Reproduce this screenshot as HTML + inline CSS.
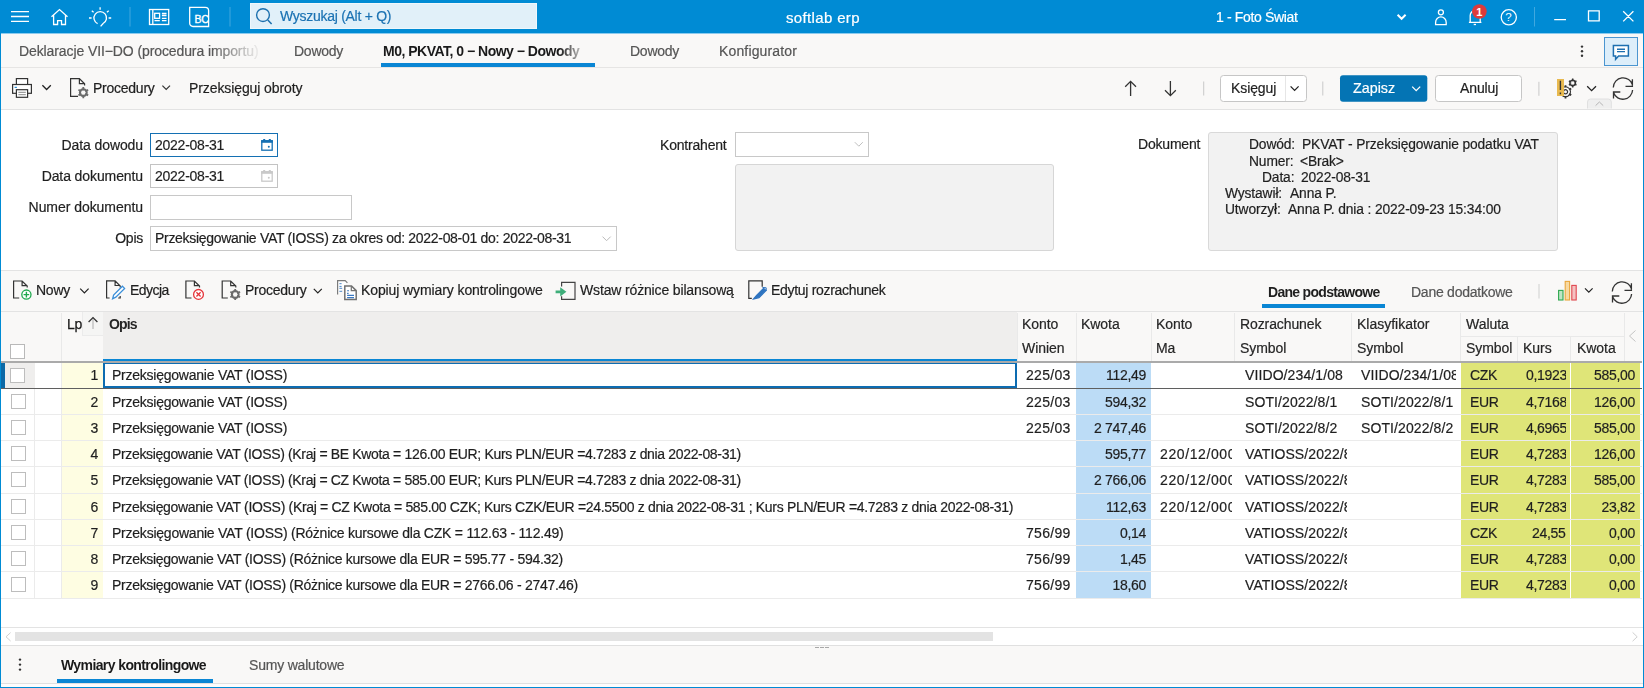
<!DOCTYPE html>
<html><head><meta charset="utf-8">
<style>
*{box-sizing:border-box;margin:0;padding:0}
html,body{width:1644px;height:688px;overflow:hidden;background:#fff}
body{position:relative;font-family:"Liberation Sans",sans-serif;font-size:14px;color:#1f1f1f}
.a{position:absolute}
.t{position:absolute;white-space:nowrap;will-change:transform;-webkit-text-stroke:0.2px currentColor;line-height:16px;font-size:14px;letter-spacing:-0.25px}
.b{font-weight:bold;letter-spacing:-0.6px;-webkit-text-stroke:0}
.hl{position:absolute;height:1px;background:#e4e4e4}
.vl{position:absolute;width:1px;background:#e4e4e4}
svg{position:absolute;overflow:visible}
</style></head><body>

<!-- TOP BAR -->
<div class="a" style="left:0;top:0;width:1644px;height:33px;background:#008bd4"></div>
<!-- page frame -->
<div class="a" style="left:0;top:33px;width:1px;height:655px;background:#008bd4"></div>
<div class="a" style="left:1643px;top:33px;width:1px;height:655px;background:#008bd4"></div>
<div class="a" style="left:0;top:687px;width:1644px;height:1px;background:#008bd4"></div>


<!-- TOP BAR ICONS -->
<svg style="left:0;top:0" width="240" height="33">
 <g stroke="#fff" stroke-width="1.3" fill="none">
  <path d="M11 11.6H29M11 16.5H29M11 21.4H29"/>
  <path d="M51.5 16.8L59.5 9.6L67.5 16.8M53.6 15.2V24.5H57.6V20.7H61.5V24.5H65.5V15.2"/>
  <path d="M97.6 23.6A6.3 6.3 0 1 1 103.1 23.5L100.6 26.4"/>
  <path d="M100.1 7.2V9.8M91.8 10.7L93.6 12.2M108.7 10.7L106.9 12.2M89 18H91.6M108.6 18H111.2"/>
  <rect x="149.5" y="9.5" width="19.2" height="15" />
  <path d="M152.8 9.5V24.5"/>
  <rect x="154.7" y="13.3" width="4.9" height="5" />
  <path d="M161.9 13.5H166.5M161.9 15.5H166.5M161.9 18.3H166.5M154.5 20.6H159.8M161.9 20.6H166.5"/>
  <path d="M189.7 7.3H205.3A3.3 3.3 0 0 1 208.6 10.6V26.5H193A3.3 3.3 0 0 1 189.7 23.2Z"/>
 </g>
 <text x="194.4" y="23.4" fill="#fff" font-family="Liberation Sans" font-size="10.5" letter-spacing="-0.2" stroke="#fff" stroke-width="0.35">BC</text>
 <rect x="129.5" y="7" width="1" height="19.5" fill="#ffffff" opacity="0.25"/>
 <rect x="229.5" y="7" width="1" height="19.5" fill="#ffffff" opacity="0.25"/>
</svg>
<div class="a" style="left:250px;top:3px;width:287px;height:26px;background:#e1f0f9;border:1px solid #eef7fc"></div>
<svg style="left:240px;top:0" width="40" height="33">
 <circle cx="23" cy="15.1" r="6.4" stroke="#1c70ae" stroke-width="1.4" fill="none"/>
 <path d="M27.8 19.9L31.6 23.9" stroke="#1c70ae" stroke-width="1.5"/>
</svg>
<div class="t" style="left:280px;top:8px;color:#1b72b3;letter-spacing:-0.28px">Wyszukaj (Alt + Q)</div>
<div class="t" style="left:785.5px;top:10px;color:#fff;font-size:15px;letter-spacing:0.35px">softlab erp</div>
<div class="t" style="left:1216px;top:9px;color:#fff;letter-spacing:-0.35px">1 - Foto Świat</div>
<svg style="left:1380px;top:0" width="264" height="33">
 <path d="M17.6 14.8L21.6 18.8L25.6 14.8" stroke="#fff" stroke-width="2" fill="none"/>
 <g stroke="#fff" stroke-width="1.3" fill="none">
  <circle cx="60.9" cy="12.3" r="2.5"/>
  <path d="M55.6 24.6V22.5A5.3 5.6 0 0 1 66.2 22.5V24.6Z"/>
  <path d="M90.2 22.3V15.5A5 5 0 0 1 100.2 15.5V22.3M88.9 22.4H101.4"/>
  <path d="M93.7 24.5H96"/>
  <circle cx="128.8" cy="17.3" r="7.6"/>
  <path d="M174.2 19.6H186M208.5 10.9H219.2V20.9H208.5ZM243.2 11.2L253.4 21.4M253.4 11.2L243.2 21.4"/>
 </g>
 <text x="125.3" y="21.3" fill="#fff" font-family="Liberation Sans" font-size="11.5">?</text>
 <rect x="154" y="7" width="1" height="19.5" fill="#fff" opacity="0.25"/>
 <circle cx="99.4" cy="11.5" r="7.3" fill="#dc3a3b"/>
 <text x="96.2" y="16" fill="#fff" font-family="Liberation Sans" font-size="11" font-weight="bold">1</text>
</svg>

<!-- TAB BAR -->
<div class="a" style="left:1px;top:33px;width:1642px;height:34px;background:#f9f8f7"></div>
<div class="a" style="left:1px;top:33px;width:1642px;height:1px;background:#8ccbee"></div>
<div class="hl" style="left:1px;top:67px;width:1642px;background:#e6e5e4"></div>
<!-- TOOLBAR -->
<div class="a" style="left:1px;top:68px;width:1642px;height:41px;background:#f9f8f7"></div>
<div class="hl" style="left:1px;top:109px;width:1642px;background:#e3e3e3"></div>


<!-- TABS -->
<div class="t" style="left:19px;top:43px;color:#555;letter-spacing:-0.1px;width:245px;overflow:hidden;-webkit-mask-image:linear-gradient(90deg,#000 0,#000 192px,rgba(0,0,0,0.1) 238px)">Deklaracje VII−DO (procedura importu)</div>
<div class="t" style="left:294px;top:43px;color:#555">Dowody</div>
<div class="t b" style="left:383px;top:43px;color:#1a1a1a;letter-spacing:-0.5px;width:200px;overflow:hidden;-webkit-mask-image:linear-gradient(90deg,#000 0,#000 176px,rgba(0,0,0,0.3) 197px)">M0, PKVAT, 0 − Nowy − Dowody</div>
<div class="a" style="left:381px;top:63px;width:214px;height:4px;background:#0a86d4"></div>
<div class="t" style="left:630px;top:43px;color:#555">Dowody</div>
<div class="t" style="left:719px;top:43px;color:#555;letter-spacing:0.15px">Konfigurator</div>
<svg style="left:1570px;top:33px" width="74" height="35">
 <circle cx="12" cy="13.6" r="1.2" fill="#333"/><circle cx="12" cy="18.2" r="1.2" fill="#333"/><circle cx="12" cy="22.8" r="1.2" fill="#333"/>
 <rect x="34.5" y="4.5" width="33" height="28" fill="#ddeefa" stroke="#4b95d0" stroke-width="1"/>
 <path d="M43.4 12.4H58.4V22.9H48.6L45.6 26.2V22.9H43.4Z" fill="#fff" stroke="#1e6fb0" stroke-width="1.5"/>
 <path d="M47 16.2H55M47 18.6H55" stroke="#1e6fb0" stroke-width="1.4"/>
</svg>

<!-- TOOLBAR ITEMS -->
<svg style="left:0;top:68px" width="340" height="41">
 <g stroke="#333" stroke-width="1.2" fill="#fff">
  <rect x="16.4" y="10.6" width="11.2" height="6"/>
  <rect x="12.6" y="16.5" width="18.8" height="8.8"/>
  <rect x="16.4" y="21.7" width="11.2" height="7.6"/>
 </g>
 <path d="M18.4 24.3H25.8M18.4 26.7H25.8" stroke="#888" stroke-width="1"/>
 <rect x="14.6" y="18.8" width="2.3" height="1.1" fill="#1b86d0"/>
 <path d="M42.4 17.3L46.6 21.5L50.8 17.3" stroke="#222" stroke-width="1.3" fill="none"/>
 <path d="M78 28.4H70.6V10.6H79.4L84.6 15.8V17.6M79.4 10.6V15.6H84.6" stroke="#333" stroke-width="1.2" fill="none"/>
 <g transform="translate(83.3 24.6)"><circle r="3.4" fill="none" stroke="#6b6b6b" stroke-width="2.1"/><path d="M0 -5.6V5.6M-4.85 -2.8L4.85 2.8M-4.85 2.8L4.85 -2.8" stroke="#6b6b6b" stroke-width="1.8"/><circle r="2.2" fill="#f9f8f7"/></g>
 <path d="M162.4 17.6L166.2 21.4L170 17.6" stroke="#333" stroke-width="1.2" fill="none"/>
</svg>
<div class="t" style="left:93px;top:80px">Procedury</div>
<div class="t" style="left:189px;top:80px;letter-spacing:-0.1px">Przeksięguj obroty</div>

<svg style="left:1100px;top:68px" width="544" height="41">
 <path d="M30.6 13.4V28M25.2 18.8L30.6 13.4L36 18.8" stroke="#333" stroke-width="1.3" fill="none"/>
 <path d="M70.4 13V27.6M65 22.2L70.4 27.6L75.8 22.2" stroke="#333" stroke-width="1.3" fill="none"/>
 <rect x="103.2" y="13.5" width="1" height="14" fill="#c9c9c9"/>
 <rect x="120.5" y="7.5" width="86" height="26" rx="3" fill="#fff" stroke="#c6c6c6"/>
 <rect x="185" y="8" width="1" height="25" fill="#e6e6e6"/>
 <path d="M190.6 18.4L194.6 22.4L198.6 18.4" stroke="#222" stroke-width="1.3" fill="none"/>
 <rect x="222.3" y="13.5" width="1" height="14" fill="#c9c9c9"/>
 <rect x="240" y="7.3" width="87.3" height="26.4" rx="3" fill="#0474b4"/>
 <path d="M312.2 18.6L316.2 22.6L320.2 18.6" stroke="#fff" stroke-width="1.3" fill="none"/>
 <rect x="335.5" y="7.5" width="86" height="26" rx="3" fill="#fff" stroke="#c6c6c6"/>
 <rect x="438.4" y="13.8" width="1" height="14" fill="#c9c9c9"/>
 <rect x="457" y="11" width="7" height="17" fill="#e8b94f"/>
 <g transform="translate(465.5 23.8)"><circle r="4.9" fill="#f9f8f7" stroke="#333" stroke-width="1.3"/><path d="M0 -6.6V6.6M-5.7 -3.3L5.7 3.3M-5.7 3.3L5.7 -3.3" stroke="#333" stroke-width="1.8"/><circle r="4.2" fill="#f9f8f7"/><circle r="2.1" fill="none" stroke="#333" stroke-width="1.2"/></g>
 <rect x="457" y="11" width="7" height="17" fill="#e8b94f"/>
 <path d="M460.4 12.8V21.9M460.4 24.6V26.2" stroke="#333" stroke-width="1.4"/>
 <g transform="translate(472.7 15)"><circle r="2.9" fill="none" stroke="#333" stroke-width="1.3"/><path d="M0 -4.4V4.4M-3.8 -2.2L3.8 2.2M-3.8 2.2L3.8 -2.2" stroke="#333" stroke-width="1.5"/><circle r="1.7" fill="#f9f8f7"/></g>
 <path d="M487.2 18.3L491.6 22.7L496 18.3" stroke="#222" stroke-width="1.3" fill="none"/>
 <path d="M513.3 19.6A9.8 9.8 0 0 1 532.6 17.2M532.4 11.2V18.3H525.5M532.6 22A9.8 9.8 0 0 1 513.6 24.8M513.5 30.6V24H520.3" stroke="#333" stroke-width="1.3" fill="none"/>
 <path d="M487.5 40.5V34A3 3 0 0 1 490.5 31H508.3A3 3 0 0 1 511.3 34V40.5" fill="#efefef" stroke="#e0e0e0"/>
 <path d="M495.6 37.6L499.4 34L503.2 37.6" stroke="#b5b5b5" stroke-width="1" fill="none"/>
</svg>
<div class="t" style="left:1231px;top:80px;letter-spacing:-0.1px">Księguj</div>
<div class="t" style="left:1353px;top:80px;color:#fff;font-size:14.3px;letter-spacing:0px">Zapisz</div>
<div class="t" style="left:1460px;top:80px;letter-spacing:-0.1px">Anuluj</div>

<!-- FORM (white) y 110-270 -->
<div class="hl" style="left:1px;top:270px;width:1642px;background:#e3e3e3"></div>

<!-- FORM -->
<div class="t" style="left:0px;top:137px;width:143px;text-align:right;letter-spacing:-0.1px">Data dowodu</div>
<div class="t" style="left:0px;top:168px;width:143px;text-align:right;letter-spacing:-0.1px">Data dokumentu</div>
<div class="t" style="left:0px;top:199px;width:143px;text-align:right;letter-spacing:-0.05px">Numer dokumentu</div>
<div class="t" style="left:0px;top:230px;width:143px;text-align:right">Opis</div>
<div class="a" style="left:150px;top:133px;width:128px;height:24px;border:1px solid #1470b3;background:#fff"></div>
<div class="a" style="left:150px;top:164px;width:128px;height:24px;border:1px solid #c3c3c3;background:#fff"></div>
<div class="a" style="left:150px;top:195px;width:202px;height:25px;border:1px solid #c8c8c8;background:#fff"></div>
<div class="a" style="left:150px;top:226px;width:467px;height:25px;border:1px solid #c8c8c8;background:#fff"></div>
<div class="t" style="left:155px;top:137px">2022-08-31</div>
<div class="t" style="left:155px;top:168px">2022-08-31</div>
<div class="t" style="left:155px;top:230px;letter-spacing:-0.3px">Przeksięgowanie VAT (IOSS) za okres od: 2022-08-01 do: 2022-08-31</div>
<svg style="left:250px;top:130px" width="380" height="130">
 <g fill="none" stroke-width="1.3">
  <rect x="11.8" y="10.8" width="10.4" height="9.4" stroke="#1470b3"/>
  <rect x="11.8" y="41.8" width="10.4" height="9.4" stroke="#c9c9c9"/>
 </g>
 <rect x="11.2" y="10.2" width="11.6" height="2.6" fill="#1470b3"/>
 <rect x="13.2" y="9" width="2" height="2" fill="#1470b3"/><rect x="18.8" y="9" width="2" height="2" fill="#1470b3"/>
 <circle cx="18.8" cy="16.8" r="1" fill="#1470b3"/>
 <rect x="11.2" y="41.2" width="11.6" height="2.6" fill="#c9c9c9"/>
 <rect x="13.2" y="40" width="2" height="2" fill="#c9c9c9"/><rect x="18.8" y="40" width="2" height="2" fill="#c9c9c9"/>
 <circle cx="18.8" cy="47.8" r="1" fill="#c9c9c9"/>
 <path d="M352.5 106.6L356.6 110.7L360.7 106.6" stroke="#b9b9b9" stroke-width="1" fill="none"/>
</svg>
<div class="t" style="left:660px;top:137px;letter-spacing:-0.2px">Kontrahent</div>
<div class="a" style="left:735px;top:132px;width:134px;height:25px;border:1px solid #c8c8c8;background:#fff"></div>
<svg style="left:840px;top:130px" width="30" height="30"><path d="M14.8 12.2L18.8 16.2L22.8 12.2" stroke="#c0c0c0" stroke-width="1" fill="none"/></svg>
<div class="a" style="left:735px;top:164px;width:319px;height:87px;border:1px solid #d6d6d6;background:#f2f2f2;border-radius:3px"></div>
<div class="t" style="left:1138px;top:136px;letter-spacing:-0.2px">Dokument</div>
<div class="a" style="left:1208px;top:132px;width:350px;height:119px;border:1px solid #d9d9d9;background:#f2f2f2;border-radius:3px"></div>
<div class="t" style="left:1249px;top:137px;font-size:13.8px;letter-spacing:-0.12px">Dowód:</div>
<div class="t" style="left:1302px;top:137px;font-size:13.8px;letter-spacing:-0.12px">PKVAT - Przeksięgowanie podatku VAT</div>
<div class="t" style="left:1249px;top:154px;font-size:13.8px;letter-spacing:-0.12px">Numer:</div>
<div class="t" style="left:1300px;top:154px;font-size:13.8px;letter-spacing:-0.12px">&lt;Brak&gt;</div>
<div class="t" style="left:1262px;top:170px;font-size:13.8px;letter-spacing:-0.12px">Data:</div>
<div class="t" style="left:1301px;top:170px;font-size:13.8px;letter-spacing:-0.12px">2022-08-31</div>
<div class="t" style="left:1225px;top:186px;font-size:13.8px;letter-spacing:-0.12px">Wystawił:</div>
<div class="t" style="left:1290px;top:186px;font-size:13.8px;letter-spacing:-0.12px">Anna P.</div>
<div class="t" style="left:1225px;top:202px;font-size:13.8px;letter-spacing:-0.12px">Utworzył:</div>
<div class="t" style="left:1288px;top:202px;font-size:13.8px;letter-spacing:-0.12px">Anna P. dnia : 2022-09-23 15:34:00</div>

<!-- GRID TOOLBAR -->
<div class="a" style="left:1px;top:271px;width:1642px;height:40px;background:#f9f8f7"></div>
<div class="hl" style="left:1px;top:311px;width:1642px;background:#e3e3e3"></div>


<!-- GRID TOOLBAR ITEMS -->
<svg style="left:0;top:271px" width="900" height="40">
 <defs>
  <path id="doc" d="M6.2 17.6H0.6V0.6H9.1L14.2 5.7V7.2M9.1 0.6V5.2H14.2" fill="none" stroke="#333" stroke-width="1.2"/>
 </defs>
 <use href="#doc" x="13" y="9.4"/>
 <circle cx="26.4" cy="23.6" r="4.6" fill="#fff" stroke="#1fa84d" stroke-width="1.3"/>
 <path d="M26.4 20.8V26.4M23.6 23.6H29.2" stroke="#1fa84d" stroke-width="1.4"/>
 <path d="M80.2 17.6L84.4 21.8L88.6 17.6" stroke="#222" stroke-width="1.2" fill="none"/>
 <path d="M109.6 27H106.6V9.9H115.1L120.2 15V16.5M115.1 9.9V14.5H120.2M118.2 27H120.2V25" fill="none" stroke="#333" stroke-width="1.2"/>
 <path d="M112.6 27.8L113.6 24L122.4 15.2L124.6 17.4L115.8 26.2Z" fill="#fff" stroke="#3b8fd9" stroke-width="1.3"/>
 <use href="#doc" x="185.3" y="9.4"/>
 <circle cx="198.5" cy="23.4" r="4.9" fill="#fff" stroke="#e5343a" stroke-width="1.3"/>
 <path d="M196.4 21.3L200.6 25.5M200.6 21.3L196.4 25.5" stroke="#e5343a" stroke-width="1.3"/>
 <use href="#doc" x="221.6" y="9.4"/>
 <g transform="translate(235.2 23.5)"><circle r="5.4" fill="#f9f8f7"/><circle r="3.4" fill="none" stroke="#6b6b6b" stroke-width="2.1"/><path d="M0 -5.6V5.6M-4.85 -2.8L4.85 2.8M-4.85 2.8L4.85 -2.8" stroke="#6b6b6b" stroke-width="1.8"/><circle r="2.2" fill="#f9f8f7"/></g>
 <path d="M313.8 17.8L317.8 21.8L321.8 17.8" stroke="#222" stroke-width="1.2" fill="none"/>
 <path d="M337.6 23.4V9.6H345.2L347.4 11.8" fill="#fff" stroke="#7a7a7a" stroke-width="1.2"/>
 <path d="M339.4 12.7H341.6M339.4 15.4H341.6M339.4 17.3H342.2M339.4 20.3H342.2" stroke="#4d87c7" stroke-width="1"/>
 <path d="M344.8 28.6V14.9H351.5L356.2 19.6V28.6Z" fill="#fff" stroke="#707070" stroke-width="1.5"/>
 <path d="M351.3 15V19.6H356" fill="none" stroke="#707070" stroke-width="1.2"/>
 <path d="M347.1 19.8H349M347.1 22.4H348.6M347.1 24.4H354M347.1 26.6H354" stroke="#3b78c0" stroke-width="1.1"/>
 <path d="M561.6 15.6V11.4H575V28.4H561.6V25.2" fill="none" stroke="#444" stroke-width="1.2"/>
 <path d="M555.6 19.4H560.2V16.2L566.4 20.8L560.2 25.4V22.2H555.6Z" fill="#3fae7a"/>
 <path d="M750.6 27.4H748.8V9.8H762.2V15.8M748.8 27.4H751.8" fill="none" stroke="#333" stroke-width="1.2"/>
 <path d="M753.6 28L756.6 24.4L763.6 17.4L766 19.6L759 26.6Z" fill="#2f74c0" stroke="#2f74c0" stroke-width="1.2"/>
 <path d="M762.4 16.4L766.2 16.8V20" fill="none" stroke="#2f74c0" stroke-width="1"/>
</svg>
<div class="t" style="left:36.3px;top:282px">Nowy</div>
<div class="t" style="left:130px;top:282px;letter-spacing:-0.55px">Edycja</div>
<div class="t" style="left:245px;top:282px">Procedury</div>
<div class="t" style="left:361px;top:282px;letter-spacing:-0.1px">Kopiuj wymiary kontrolingowe</div>
<div class="t" style="left:580px;top:282px;letter-spacing:-0.15px">Wstaw różnice bilansową</div>
<div class="t" style="left:771px;top:282px;letter-spacing:-0.3px">Edytuj rozrachunek</div>
<div class="t b" style="left:1268px;top:284px;letter-spacing:-0.7px">Dane podstawowe</div>
<div class="a" style="left:1262px;top:304px;width:123px;height:4px;background:#0a86d4"></div>
<div class="t" style="left:1411px;top:284px;color:#555;letter-spacing:-0.25px">Dane dodatkowe</div>
<svg style="left:1530px;top:271px" width="114" height="40">
 <rect x="8.5" y="13" width="1" height="14.5" fill="#cfcfcf"/>
 <rect x="28.6" y="19.4" width="4.4" height="9.6" fill="#bfe5c5" stroke="#2fa84f" stroke-width="1.1"/>
 <rect x="35.2" y="10.4" width="4.4" height="18.6" fill="#f7d9a1" stroke="#e9a63c" stroke-width="1.1"/>
 <rect x="41.8" y="14.4" width="4.4" height="14.6" fill="#f5c1c1" stroke="#e0474f" stroke-width="1.1"/>
 <path d="M55 17.4L58.8 21.2L62.6 17.4" stroke="#222" stroke-width="1.2" fill="none"/>
 <path d="M82.3 20.6A9.8 9.8 0 0 1 101.6 18.2M101.4 12.2V19.3H94.5M101.6 23A9.8 9.8 0 0 1 82.6 25.8M82.5 31.6V25H89.3" stroke="#333" stroke-width="1.3" fill="none"/>
</svg>

<!-- GRID HEADER -->
<div class="a" style="left:1px;top:312px;width:1641px;height:49px;background:#f9f8f7"></div>
<div class="a" style="left:103px;top:312px;width:914px;height:47px;background:#efeeed"></div>

<!-- GRID BODY -->
<div class="a" style="left:62px;top:363px;width:41px;height:235px;background:#fefde2"></div>
<div class="a" style="left:1076px;top:363px;width:75px;height:235px;background:#bcdcf6"></div>
<div class="a" style="left:1461px;top:363px;width:109px;height:235px;background:#dfe578"></div>
<div class="a" style="left:1571px;top:363px;width:69px;height:235px;background:#dfe578"></div>
<div class="vl" style="left:34px;top:363px;height:235px;background:#ebebeb"></div>
<div class="vl" style="left:61px;top:363px;height:235px;background:#ebebeb"></div>
<div class="a" style="left:1px;top:363px;width:4px;height:25px;background:#0c69a6"></div>
<div class="a" style="left:5px;top:363px;width:30px;height:25px;background:#efeeed"></div>
<div class="hl" style="left:1px;top:388px;width:1641px;background:#5f5f5f"></div>
<div class="hl" style="left:1px;top:414px;width:1641px;background:#ebebeb"></div>
<div class="hl" style="left:1px;top:440px;width:1641px;background:#ebebeb"></div>
<div class="hl" style="left:1px;top:466px;width:1641px;background:#ebebeb"></div>
<div class="hl" style="left:1px;top:493px;width:1641px;background:#ebebeb"></div>
<div class="hl" style="left:1px;top:519px;width:1641px;background:#ebebeb"></div>
<div class="hl" style="left:1px;top:545px;width:1641px;background:#ebebeb"></div>
<div class="hl" style="left:1px;top:571px;width:1641px;background:#ebebeb"></div>
<div class="hl" style="left:1px;top:598px;width:1641px;background:#ebebeb"></div>
<div class="a" style="left:103px;top:359px;width:914px;height:2px;background:#0a86d4"></div>
<div class="a" style="left:1px;top:361px;width:1641px;height:2px;background:#aaaaaa"></div>
<div class="a" style="left:103px;top:363px;width:914px;height:25px;border:2px solid #0d6cb1;border-top-width:1px;background:#fff"></div>
<div class="a" style="left:10px;top:344px;width:15px;height:15px;border:1px solid #b9b9b9;background:#fff"></div>
<div class="a" style="left:10px;top:368px;width:15px;height:15px;border:1px solid #bdbdbd;background:#fff"></div>
<div class="a" style="left:11px;top:394px;width:15px;height:15px;border:1px solid #bdbdbd;background:#fff"></div>
<div class="a" style="left:11px;top:420px;width:15px;height:15px;border:1px solid #bdbdbd;background:#fff"></div>
<div class="a" style="left:11px;top:446px;width:15px;height:15px;border:1px solid #bdbdbd;background:#fff"></div>
<div class="a" style="left:11px;top:472px;width:15px;height:15px;border:1px solid #bdbdbd;background:#fff"></div>
<div class="a" style="left:11px;top:499px;width:15px;height:15px;border:1px solid #bdbdbd;background:#fff"></div>
<div class="a" style="left:11px;top:525px;width:15px;height:15px;border:1px solid #bdbdbd;background:#fff"></div>
<div class="a" style="left:11px;top:551px;width:15px;height:15px;border:1px solid #bdbdbd;background:#fff"></div>
<div class="a" style="left:11px;top:577px;width:15px;height:15px;border:1px solid #bdbdbd;background:#fff"></div>
<div class="t" style="left:62px;top:367px;letter-spacing:-0.3px;width:36px;overflow:hidden;text-align:right;">1</div>
<div class="t" style="left:112px;top:367px;letter-spacing:-0.3px;letter-spacing:-0.24px">Przeksięgowanie VAT (IOSS)</div>
<div class="t" style="left:1026px;top:367px;letter-spacing:-0.3px;width:50px;overflow:hidden;text-align:left;letter-spacing:0.3px">225/03</div>
<div class="t" style="left:1076px;top:367px;letter-spacing:-0.3px;width:70px;overflow:hidden;text-align:right;">112,49</div>
<div class="t" style="left:1245px;top:367px;letter-spacing:-0.3px;width:102px;overflow:hidden;text-align:left;letter-spacing:0.1px">VIIDO/234/1/08</div>
<div class="t" style="left:1361px;top:367px;letter-spacing:-0.3px;width:95px;overflow:hidden;text-align:left;letter-spacing:0.1px">VIIDO/234/1/08</div>
<div class="t" style="left:1470px;top:367px;letter-spacing:-0.3px;width:45px;overflow:hidden;text-align:left;">CZK</div>
<div class="t" style="left:1526px;top:367px;letter-spacing:-0.3px;width:40px;overflow:hidden;text-align:left;">0,1923</div>
<div class="t" style="left:1571px;top:367px;letter-spacing:-0.3px;width:64px;overflow:hidden;text-align:right;">585,00</div>
<div class="t" style="left:62px;top:394px;letter-spacing:-0.3px;width:36px;overflow:hidden;text-align:right;">2</div>
<div class="t" style="left:112px;top:394px;letter-spacing:-0.3px;letter-spacing:-0.24px">Przeksięgowanie VAT (IOSS)</div>
<div class="t" style="left:1026px;top:394px;letter-spacing:-0.3px;width:50px;overflow:hidden;text-align:left;letter-spacing:0.3px">225/03</div>
<div class="t" style="left:1076px;top:394px;letter-spacing:-0.3px;width:70px;overflow:hidden;text-align:right;">594,32</div>
<div class="t" style="left:1245px;top:394px;letter-spacing:-0.3px;width:102px;overflow:hidden;text-align:left;letter-spacing:0.1px">SOTI/2022/8/1</div>
<div class="t" style="left:1361px;top:394px;letter-spacing:-0.3px;width:95px;overflow:hidden;text-align:left;letter-spacing:0.1px">SOTI/2022/8/1</div>
<div class="t" style="left:1470px;top:394px;letter-spacing:-0.3px;width:45px;overflow:hidden;text-align:left;">EUR</div>
<div class="t" style="left:1526px;top:394px;letter-spacing:-0.3px;width:40px;overflow:hidden;text-align:left;">4,7168</div>
<div class="t" style="left:1571px;top:394px;letter-spacing:-0.3px;width:64px;overflow:hidden;text-align:right;">126,00</div>
<div class="t" style="left:62px;top:420px;letter-spacing:-0.3px;width:36px;overflow:hidden;text-align:right;">3</div>
<div class="t" style="left:112px;top:420px;letter-spacing:-0.3px;letter-spacing:-0.24px">Przeksięgowanie VAT (IOSS)</div>
<div class="t" style="left:1026px;top:420px;letter-spacing:-0.3px;width:50px;overflow:hidden;text-align:left;letter-spacing:0.3px">225/03</div>
<div class="t" style="left:1076px;top:420px;letter-spacing:-0.3px;width:70px;overflow:hidden;text-align:right;">2 747,46</div>
<div class="t" style="left:1245px;top:420px;letter-spacing:-0.3px;width:102px;overflow:hidden;text-align:left;letter-spacing:0.1px">SOTI/2022/8/2</div>
<div class="t" style="left:1361px;top:420px;letter-spacing:-0.3px;width:95px;overflow:hidden;text-align:left;letter-spacing:0.1px">SOTI/2022/8/2</div>
<div class="t" style="left:1470px;top:420px;letter-spacing:-0.3px;width:45px;overflow:hidden;text-align:left;">EUR</div>
<div class="t" style="left:1526px;top:420px;letter-spacing:-0.3px;width:40px;overflow:hidden;text-align:left;">4,6965</div>
<div class="t" style="left:1571px;top:420px;letter-spacing:-0.3px;width:64px;overflow:hidden;text-align:right;">585,00</div>
<div class="t" style="left:62px;top:446px;letter-spacing:-0.3px;width:36px;overflow:hidden;text-align:right;">4</div>
<div class="t" style="left:112px;top:446px;letter-spacing:-0.3px;letter-spacing:-0.34px">Przeksięgowanie VAT (IOSS) (Kraj = BE Kwota = 126.00 EUR; Kurs PLN/EUR =4.7283 z dnia 2022-08-31)</div>
<div class="t" style="left:1076px;top:446px;letter-spacing:-0.3px;width:70px;overflow:hidden;text-align:right;">595,77</div>
<div class="t" style="left:1160px;top:446px;letter-spacing:-0.3px;width:72px;overflow:hidden;text-align:left;letter-spacing:0.6px">220/12/0001</div>
<div class="t" style="left:1245px;top:446px;letter-spacing:-0.3px;width:102px;overflow:hidden;text-align:left;letter-spacing:0.1px">VATIOSS/2022/8</div>
<div class="t" style="left:1470px;top:446px;letter-spacing:-0.3px;width:45px;overflow:hidden;text-align:left;">EUR</div>
<div class="t" style="left:1526px;top:446px;letter-spacing:-0.3px;width:40px;overflow:hidden;text-align:left;">4,7283</div>
<div class="t" style="left:1571px;top:446px;letter-spacing:-0.3px;width:64px;overflow:hidden;text-align:right;">126,00</div>
<div class="t" style="left:62px;top:472px;letter-spacing:-0.3px;width:36px;overflow:hidden;text-align:right;">5</div>
<div class="t" style="left:112px;top:472px;letter-spacing:-0.3px;letter-spacing:-0.34px">Przeksięgowanie VAT (IOSS) (Kraj = CZ Kwota = 585.00 EUR; Kurs PLN/EUR =4.7283 z dnia 2022-08-31)</div>
<div class="t" style="left:1076px;top:472px;letter-spacing:-0.3px;width:70px;overflow:hidden;text-align:right;">2 766,06</div>
<div class="t" style="left:1160px;top:472px;letter-spacing:-0.3px;width:72px;overflow:hidden;text-align:left;letter-spacing:0.6px">220/12/0001</div>
<div class="t" style="left:1245px;top:472px;letter-spacing:-0.3px;width:102px;overflow:hidden;text-align:left;letter-spacing:0.1px">VATIOSS/2022/8</div>
<div class="t" style="left:1470px;top:472px;letter-spacing:-0.3px;width:45px;overflow:hidden;text-align:left;">EUR</div>
<div class="t" style="left:1526px;top:472px;letter-spacing:-0.3px;width:40px;overflow:hidden;text-align:left;">4,7283</div>
<div class="t" style="left:1571px;top:472px;letter-spacing:-0.3px;width:64px;overflow:hidden;text-align:right;">585,00</div>
<div class="t" style="left:62px;top:499px;letter-spacing:-0.3px;width:36px;overflow:hidden;text-align:right;">6</div>
<div class="t" style="left:112px;top:499px;letter-spacing:-0.3px;letter-spacing:-0.32px">Przeksięgowanie VAT (IOSS) (Kraj = CZ Kwota = 585.00 CZK; Kurs CZK/EUR =24.5500 z dnia 2022-08-31 ; Kurs PLN/EUR =4.7283 z dnia 2022-08-31)</div>
<div class="t" style="left:1076px;top:499px;letter-spacing:-0.3px;width:70px;overflow:hidden;text-align:right;">112,63</div>
<div class="t" style="left:1160px;top:499px;letter-spacing:-0.3px;width:72px;overflow:hidden;text-align:left;letter-spacing:0.6px">220/12/0001</div>
<div class="t" style="left:1245px;top:499px;letter-spacing:-0.3px;width:102px;overflow:hidden;text-align:left;letter-spacing:0.1px">VATIOSS/2022/8</div>
<div class="t" style="left:1470px;top:499px;letter-spacing:-0.3px;width:45px;overflow:hidden;text-align:left;">EUR</div>
<div class="t" style="left:1526px;top:499px;letter-spacing:-0.3px;width:40px;overflow:hidden;text-align:left;">4,7283</div>
<div class="t" style="left:1571px;top:499px;letter-spacing:-0.3px;width:64px;overflow:hidden;text-align:right;">23,82</div>
<div class="t" style="left:62px;top:525px;letter-spacing:-0.3px;width:36px;overflow:hidden;text-align:right;">7</div>
<div class="t" style="left:112px;top:525px;letter-spacing:-0.3px;letter-spacing:-0.23px">Przeksięgowanie VAT (IOSS) (Różnice kursowe dla CZK = 112.63 - 112.49)</div>
<div class="t" style="left:1026px;top:525px;letter-spacing:-0.3px;width:50px;overflow:hidden;text-align:left;letter-spacing:0.3px">756/99</div>
<div class="t" style="left:1076px;top:525px;letter-spacing:-0.3px;width:70px;overflow:hidden;text-align:right;">0,14</div>
<div class="t" style="left:1245px;top:525px;letter-spacing:-0.3px;width:102px;overflow:hidden;text-align:left;letter-spacing:0.1px">VATIOSS/2022/8</div>
<div class="t" style="left:1470px;top:525px;letter-spacing:-0.3px;width:45px;overflow:hidden;text-align:left;">CZK</div>
<div class="t" style="left:1517px;top:525px;letter-spacing:-0.3px;width:48.5px;overflow:hidden;text-align:right;">24,55</div>
<div class="t" style="left:1571px;top:525px;letter-spacing:-0.3px;width:64px;overflow:hidden;text-align:right;">0,00</div>
<div class="t" style="left:62px;top:551px;letter-spacing:-0.3px;width:36px;overflow:hidden;text-align:right;">8</div>
<div class="t" style="left:112px;top:551px;letter-spacing:-0.3px;letter-spacing:-0.29px">Przeksięgowanie VAT (IOSS) (Różnice kursowe dla EUR = 595.77 - 594.32)</div>
<div class="t" style="left:1026px;top:551px;letter-spacing:-0.3px;width:50px;overflow:hidden;text-align:left;letter-spacing:0.3px">756/99</div>
<div class="t" style="left:1076px;top:551px;letter-spacing:-0.3px;width:70px;overflow:hidden;text-align:right;">1,45</div>
<div class="t" style="left:1245px;top:551px;letter-spacing:-0.3px;width:102px;overflow:hidden;text-align:left;letter-spacing:0.1px">VATIOSS/2022/8</div>
<div class="t" style="left:1470px;top:551px;letter-spacing:-0.3px;width:45px;overflow:hidden;text-align:left;">EUR</div>
<div class="t" style="left:1526px;top:551px;letter-spacing:-0.3px;width:40px;overflow:hidden;text-align:left;">4,7283</div>
<div class="t" style="left:1571px;top:551px;letter-spacing:-0.3px;width:64px;overflow:hidden;text-align:right;">0,00</div>
<div class="t" style="left:62px;top:577px;letter-spacing:-0.3px;width:36px;overflow:hidden;text-align:right;">9</div>
<div class="t" style="left:112px;top:577px;letter-spacing:-0.3px;letter-spacing:-0.29px">Przeksięgowanie VAT (IOSS) (Różnice kursowe dla EUR = 2766.06 - 2747.46)</div>
<div class="t" style="left:1026px;top:577px;letter-spacing:-0.3px;width:50px;overflow:hidden;text-align:left;letter-spacing:0.3px">756/99</div>
<div class="t" style="left:1076px;top:577px;letter-spacing:-0.3px;width:70px;overflow:hidden;text-align:right;">18,60</div>
<div class="t" style="left:1245px;top:577px;letter-spacing:-0.3px;width:102px;overflow:hidden;text-align:left;letter-spacing:0.1px">VATIOSS/2022/8</div>
<div class="t" style="left:1470px;top:577px;letter-spacing:-0.3px;width:45px;overflow:hidden;text-align:left;">EUR</div>
<div class="t" style="left:1526px;top:577px;letter-spacing:-0.3px;width:40px;overflow:hidden;text-align:left;">4,7283</div>
<div class="t" style="left:1571px;top:577px;letter-spacing:-0.3px;width:64px;overflow:hidden;text-align:right;">0,00</div>
<!-- GRID HEADER CONTENT -->
<div class="a" style="left:82px;top:312px;width:21px;height:24px;background:#f5f5f4;border-left:1px solid #ebebeb;border-bottom:1px solid #ebebeb"></div>
<div class="vl" style="left:61px;top:313px;height:48px;background:#e9e9e9"></div>
<div class="vl" style="left:1017px;top:313px;height:48px;background:#e9e9e9"></div>
<div class="vl" style="left:1076px;top:313px;height:48px;background:#e9e9e9"></div>
<div class="vl" style="left:1151px;top:313px;height:48px;background:#e9e9e9"></div>
<div class="vl" style="left:1234px;top:313px;height:48px;background:#e9e9e9"></div>
<div class="vl" style="left:1351px;top:313px;height:48px;background:#e9e9e9"></div>
<div class="vl" style="left:1460px;top:313px;height:48px;background:#e9e9e9"></div>
<div class="vl" style="left:1624px;top:313px;height:48px;background:#e9e9e9"></div>
<div class="vl" style="left:1517px;top:337px;height:24px;background:#e9e9e9"></div>
<div class="vl" style="left:1570px;top:337px;height:24px;background:#e9e9e9"></div>
<div class="hl" style="left:1461px;top:336px;width:163px;background:#e9e9e9"></div>
<div class="t" style="left:67px;top:316px;letter-spacing:-0.05px;color:#262626;letter-spacing:-0.3px;color:#1a1a1a;-webkit-text-stroke:0.25px #1a1a1a">Lp</div>
<div class="t" style="left:108.5px;top:316px;letter-spacing:-0.05px;color:#262626;font-weight:bold;letter-spacing:-0.85px;-webkit-text-stroke:0">Opis</div>
<div class="t" style="left:1022px;top:316px;letter-spacing:-0.05px;color:#262626;">Konto</div>
<div class="t" style="left:1022px;top:340px;letter-spacing:-0.05px;color:#262626;">Winien</div>
<div class="t" style="left:1081px;top:316px;letter-spacing:-0.05px;color:#262626;">Kwota</div>
<div class="t" style="left:1156px;top:316px;letter-spacing:-0.05px;color:#262626;">Konto</div>
<div class="t" style="left:1156px;top:340px;letter-spacing:-0.05px;color:#262626;">Ma</div>
<div class="t" style="left:1240px;top:316px;letter-spacing:-0.05px;color:#262626;letter-spacing:-0.1px">Rozrachunek</div>
<div class="t" style="left:1240px;top:340px;letter-spacing:-0.05px;color:#262626;">Symbol</div>
<div class="t" style="left:1357px;top:316px;letter-spacing:0px;color:#262626;width:75px;overflow:hidden">Klasyfikator</div>
<div class="t" style="left:1357px;top:340px;letter-spacing:-0.05px;color:#262626;">Symbol</div>
<div class="t" style="left:1466px;top:316px;letter-spacing:-0.05px;color:#262626;">Waluta</div>
<div class="t" style="left:1466px;top:340px;letter-spacing:-0.05px;color:#262626;">Symbol</div>
<div class="t" style="left:1523px;top:340px;letter-spacing:-0.05px;color:#262626;">Kurs</div>
<div class="t" style="left:1577px;top:340px;letter-spacing:-0.05px;color:#262626;">Kwota</div>
<svg style="left:0;top:312px" width="1644" height="50"><path d="M93 5.6V17" stroke="#b8b8b8" stroke-width="1.2"/><path d="M88.6 10L93 5.6L97.4 10" stroke="#333" stroke-width="1.3" fill="none"/><path d="M1635.5 18.5L1629.5 24L1635.5 29.5" stroke="#c4c4c4" stroke-width="1" fill="none"/></svg>
<!-- /GRID -->
<!-- BOTTOM -->
<div class="hl" style="left:1px;top:627px;width:1642px;background:#e3e3e3"></div>
<div class="a" style="left:15px;top:632px;width:978px;height:9px;background:#e3e3e3"></div>
<svg style="left:0;top:627px" width="1644" height="60">
 <path d="M10.6 5.6L6 9.8L10.6 14" stroke="#d0d0d0" stroke-width="1" fill="none"/>
 <path d="M1632.6 5.4L1637.2 9.8L1632.6 14.2" stroke="#d0d0d0" stroke-width="1" fill="none"/>
</svg>
<div class="hl" style="left:1px;top:645px;width:1642px;background:#e0e0e0"></div>
<div class="a" style="left:1px;top:646px;width:1642px;height:37px;background:#f9f8f7"></div>
<svg style="left:814px;top:645px" width="20" height="5"><path d="M1 2.5H5M6 2.5H10M11 2.5H15" stroke="#a8a8a8" stroke-width="1"/></svg>
<svg style="left:0;top:646px" width="40" height="37">
 <circle cx="20" cy="13.6" r="1.2" fill="#333"/><circle cx="20" cy="18.6" r="1.2" fill="#333"/><circle cx="20" cy="23.6" r="1.2" fill="#333"/>
</svg>
<div class="t b" style="left:61px;top:657px;letter-spacing:-0.6px;color:#1a1a1a">Wymiary kontrolingowe</div>
<div class="a" style="left:57px;top:679px;width:156px;height:4px;background:#0a86d4"></div>
<div class="t" style="left:249px;top:657px;color:#555;letter-spacing:-0.2px">Sumy walutowe</div>
<div class="hl" style="left:1px;top:683px;width:1642px;background:#e0e0e0"></div>
<div class="a" style="left:1px;top:684px;width:1642px;height:3px;background:#fdfdfd"></div>
<div class="a" style="left:0;top:687px;width:1644px;height:1px;background:#008bd4"></div>
</body></html>
